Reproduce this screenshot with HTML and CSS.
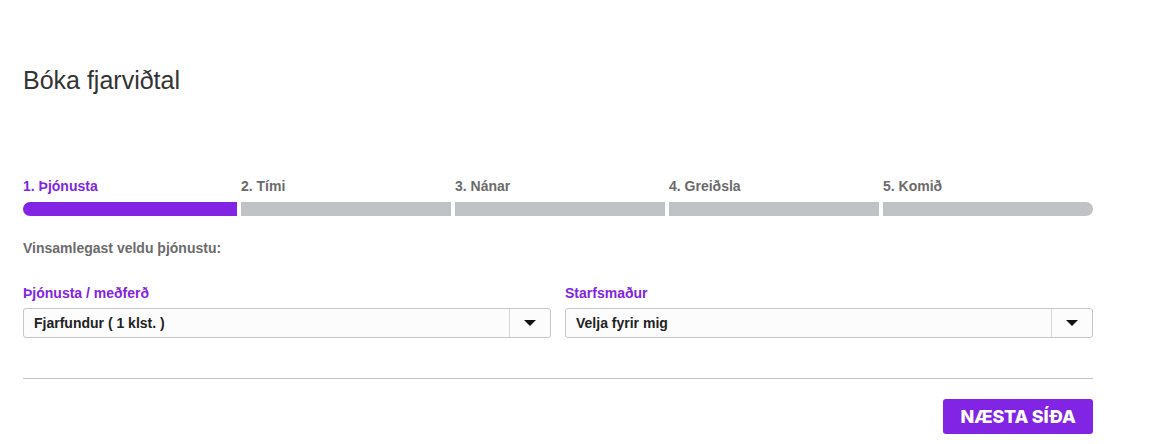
FILE: index.html
```html
<!DOCTYPE html>
<html lang="is">
<head>
<meta charset="utf-8">
<title>Bóka fjarviðtal</title>
<link rel="stylesheet" href="styles.css">
</head>
<body>
<main class="page">
  <h1 class="title">Bóka fjarviðtal</h1>
  <div class="steps">
    <div class="step active"><span class="step-label">1. Þjónusta</span><span class="step-bar"></span></div>
    <div class="step"><span class="step-label">2. Tími</span><span class="step-bar"></span></div>
    <div class="step"><span class="step-label">3. Nánar</span><span class="step-bar"></span></div>
    <div class="step"><span class="step-label">4. Greiðsla</span><span class="step-bar"></span></div>
    <div class="step"><span class="step-label">5. Komið</span><span class="step-bar"></span></div>
  </div>
  <p class="intro">Vinsamlegast veldu þjónustu:</p>
  <div class="fields">
    <div class="field">
      <label class="field-label">Þjónusta / meðferð</label>
      <div class="select"><span class="select-value">Fjarfundur ( 1 klst. )</span><span class="select-arrow"><span class="caret"></span></span></div>
    </div>
    <div class="field">
      <label class="field-label">Starfsmaður</label>
      <div class="select"><span class="select-value">Velja fyrir mig</span><span class="select-arrow"><span class="caret"></span></span></div>
    </div>
  </div>
  <hr class="divider">
  <div class="actions">
    <button class="next-btn">NÆSTA SÍÐA</button>
  </div>
</main>
</body>
</html>
```
FILE: styles.css
```css
* { box-sizing: border-box; }
html, body { margin: 0; padding: 0; background: #fff; }
body { font-family: "Liberation Sans", Arial, sans-serif; }
.page {
  width: 1070px;
  margin-left: 23px;
  padding-top: 65px;
}
.title {
  margin: 0;
  font-size: 25px;
  font-weight: 400;
  color: #333;
  line-height: 30px;
}
.steps {
  display: flex;
  gap: 4px;
  margin-top: 83px;
}
.step {
  flex: 1 1 0;
  display: flex;
  flex-direction: column;
}
.step:first-child { flex: 0 0 214px; }
.step-label {
  font-size: 14px;
  font-weight: 700;
  color: #6b6b6b;
  line-height: 16px;
}
.step.active .step-label { color: #8224e3; }
.step-bar {
  display: block;
  height: 14px;
  margin-top: 8px;
  background: #bfc3c6;
}
.step.active .step-bar { background: #8224e3; }
.step:first-child .step-bar { border-radius: 7px 0 0 7px; }
.step:last-child .step-bar { border-radius: 0 7px 7px 0; }
.intro {
  margin: 23px 0 0;
  font-size: 14px;
  font-weight: 700;
  color: #6b6b6b;
  line-height: 18px;
}
.fields {
  display: flex;
  gap: 14px;
  margin-top: 28px;
}
.field { flex: 1 1 0; }
.field-label {
  display: block;
  font-size: 14px;
  font-weight: 700;
  color: #8224e3;
  line-height: 16px;
  margin-bottom: 7px;
}
.select {
  display: flex;
  height: 30px;
  border: 1px solid #c6c6c6;
  border-radius: 3px;
  background: #fcfcfc;
}
.select-value {
  flex: 1;
  padding-left: 10px;
  font-size: 14px;
  font-weight: 700;
  color: #222;
  line-height: 28px;
}
.select-arrow {
  width: 41px;
  border-left: 1px solid #d6d6d6;
  display: flex;
  align-items: center;
  justify-content: center;
}
.caret {
  width: 0;
  height: 0;
  border-left: 6px solid transparent;
  border-right: 6px solid transparent;
  border-top: 6px solid #111;
}
.divider {
  margin: 40px 0 0;
  border: 0;
  border-top: 1px solid #c4c4c4;
}
.actions {
  display: flex;
  justify-content: flex-end;
  margin-top: 20px;
}
.next-btn {
  width: 150px;
  height: 35px;
  border: 0;
  border-radius: 3px;
  background: #8224e3;
  color: #fff;
  font-family: Inter, "Liberation Sans", sans-serif;
  font-weight: 800;
  font-size: 18px;
  letter-spacing: -0.2px;
  padding: 0;
  cursor: pointer;
}
```
